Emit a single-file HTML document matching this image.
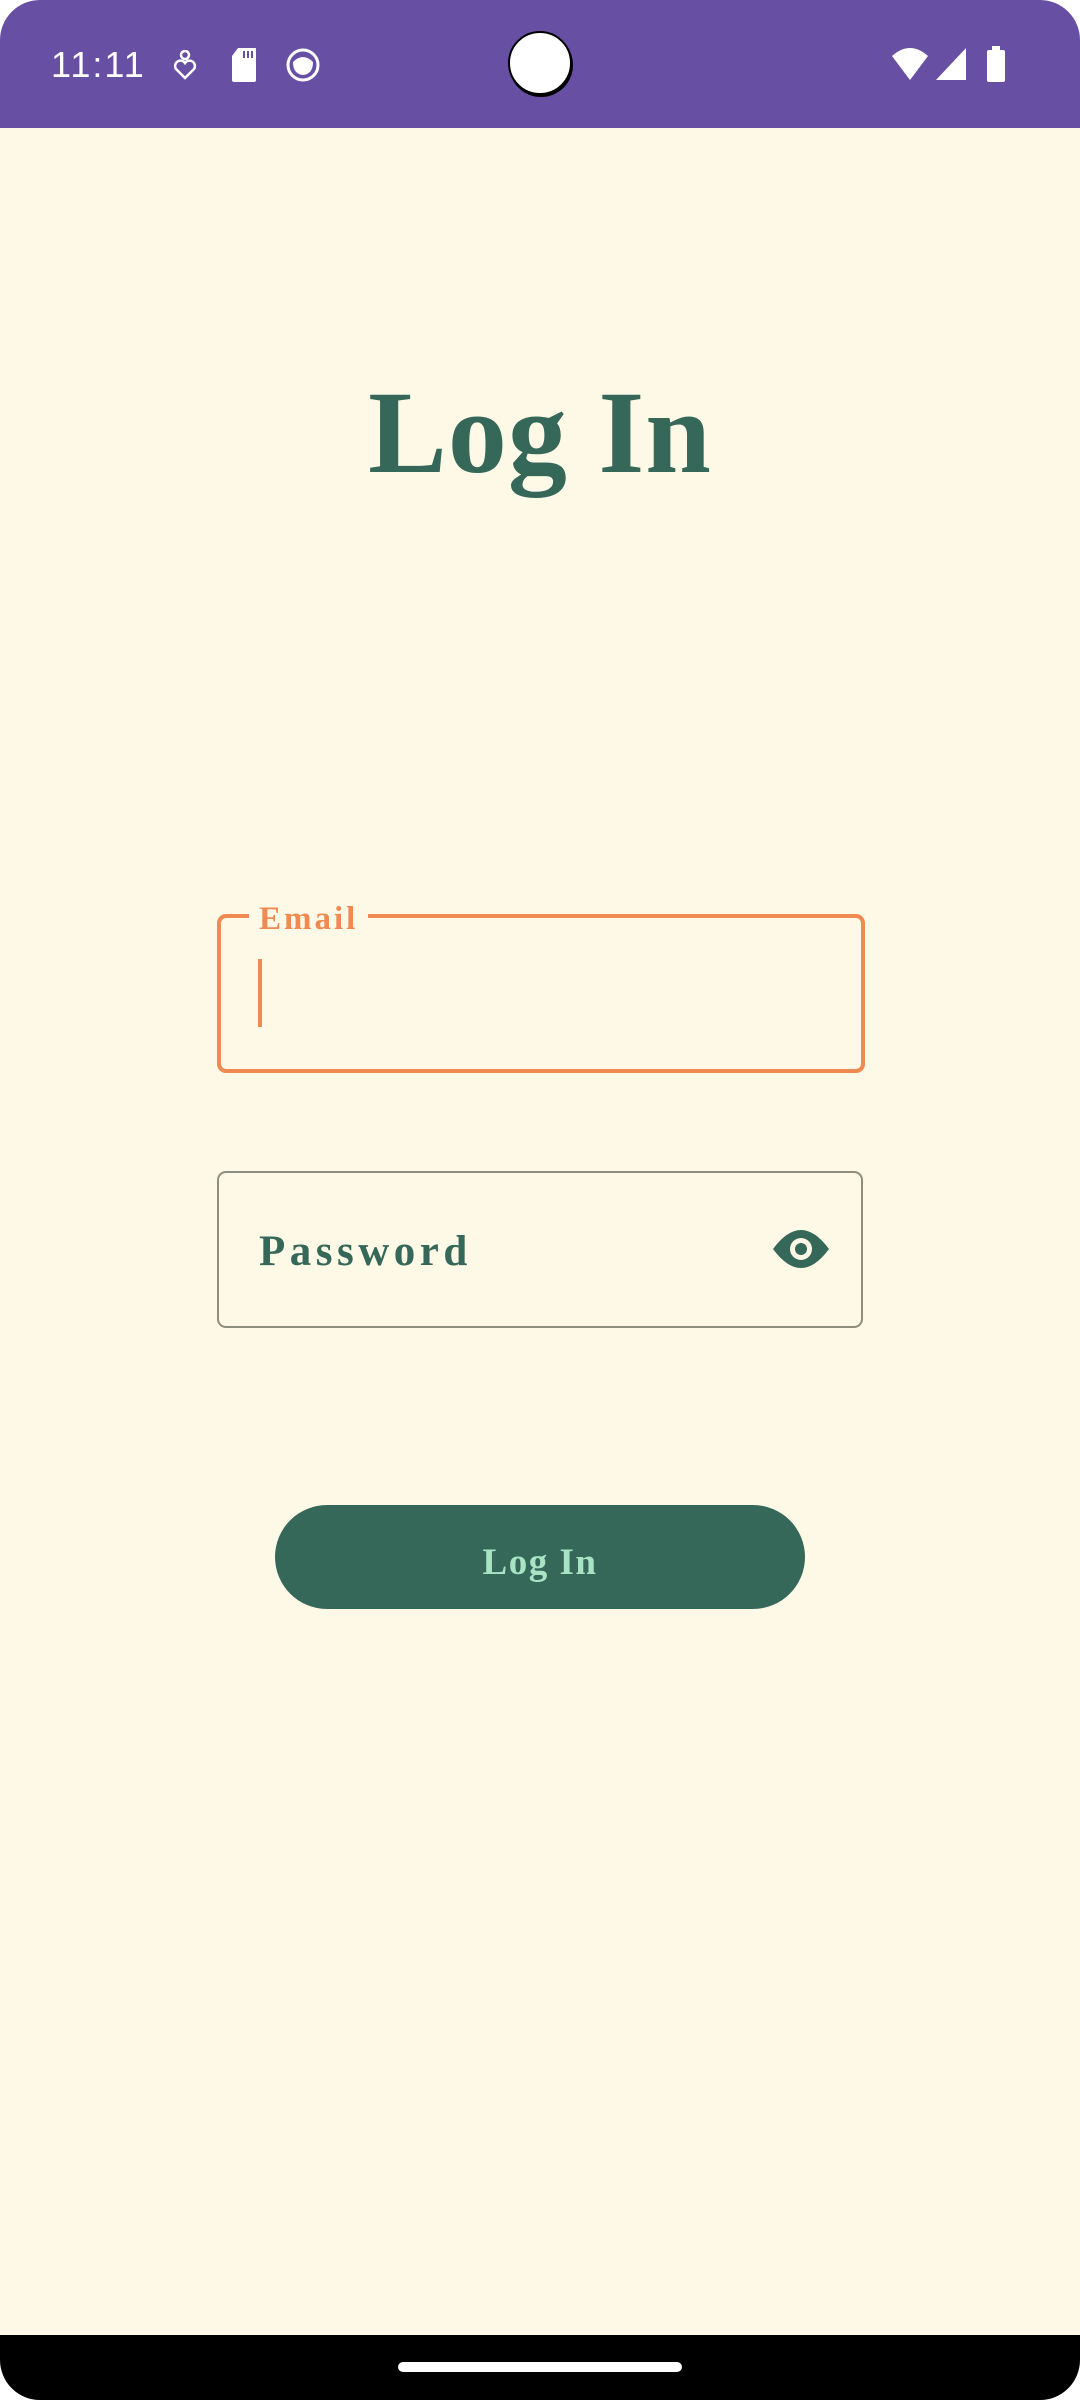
<!DOCTYPE html>
<html><head><meta charset="utf-8"><style>
html,body{margin:0;padding:0;background:#fff;}
#s{position:relative;width:1080px;height:2400px;background:#FEF9E7;border-radius:40px;overflow:hidden;font-family:"Liberation Serif",serif;}
.sb{position:absolute;left:0;top:0;width:1080px;height:128px;background:#6750A4;}
.time{position:absolute;left:51px;top:44px;color:#fff;font:36px "Liberation Sans",sans-serif;letter-spacing:2px;}
.cam{position:absolute;left:508px;top:31px;width:60px;height:60px;border-radius:50%;background:#fff;border:2px solid #000;box-shadow:1px 2px 0 #000;}
.nav{position:absolute;left:0;top:2335px;width:1080px;height:65px;background:#000;}
.pill{position:absolute;left:398px;top:2362px;width:284px;height:10px;border-radius:5px;background:#fff;}
.title{position:absolute;left:0;width:1080px;top:358px;text-align:center;font-size:118px;font-weight:bold;color:#356859;line-height:150px;letter-spacing:1px;}
.email{position:absolute;left:217px;top:914px;width:640px;height:151px;border:4px solid #F08A50;border-radius:9px;}
.elabel{position:absolute;left:249px;top:899px;padding:0 10px;background:#FEF9E7;color:#F08A50;font-size:33px;font-weight:bold;line-height:40px;letter-spacing:3px;}
.cursor{position:absolute;left:258px;top:959px;width:4px;height:68px;background:#F08A50;}
.pw{position:absolute;left:217px;top:1171px;width:642px;height:153px;border:2.5px solid #8E8E7E;border-radius:9px;}
.plabel{position:absolute;left:259px;top:1227px;color:#356859;font-size:43px;font-weight:bold;line-height:50px;letter-spacing:4.5px;}
.btn{position:absolute;left:275px;top:1505px;width:530px;height:104px;border-radius:52px;background:#356859;color:#A8E3C4;text-align:center;line-height:116px;font-size:37px;font-weight:bold;letter-spacing:1.5px;}
</style></head><body><div id="s">
<div class="sb">
<div class="time">11:11</div>
<svg style="position:absolute;left:172px;top:50px" width="26" height="30" viewBox="0 0 26 30"><circle cx="13" cy="5" r="4" fill="none" stroke="#fff" stroke-width="2.5"/><path d="M13 28 L4 19 A5 5 0 0 1 13 13 A5 5 0 0 1 22 19 Z" fill="none" stroke="#fff" stroke-width="2.5"/></svg>
<svg style="position:absolute;left:230px;top:48px" width="28" height="34" viewBox="0 0 28 34"><path d="M8 0 H26 V32 a2 2 0 0 1 -2 2 H4 a2 2 0 0 1 -2 -2 V8 Z" fill="#fff"/><rect x="13" y="3" width="2" height="7" fill="#6750A4"/><rect x="17" y="3" width="2" height="7" fill="#6750A4"/><rect x="21" y="3" width="2" height="7" fill="#6750A4"/></svg>
<svg style="position:absolute;left:286px;top:48px" width="34" height="34" viewBox="0 0 34 34"><circle cx="17" cy="17" r="15" fill="none" stroke="#fff" stroke-width="3"/><path d="M7 14 Q17 4 27 14 Q27 26 17 27 Q7 26 7 14Z" fill="#fff"/></svg>
<div class="cam"></div>
<svg style="position:absolute;left:890px;top:46px" width="40" height="36" viewBox="0 0 40 36"><path d="M20 34 L2 10 Q20 -6 38 10 Z" fill="#fff"/></svg>
<svg style="position:absolute;left:934px;top:46px" width="34" height="36" viewBox="0 0 34 36"><path d="M32 2 V34 H2 Z" fill="#fff"/></svg>
<svg style="position:absolute;left:986px;top:46px" width="20" height="36" viewBox="0 0 20 36"><rect x="6" y="0" width="8" height="5" fill="#fff"/><rect x="1" y="4" width="18" height="32" rx="2" fill="#fff"/></svg>
</div>
<div class="title">Log In</div>
<div class="email"></div>
<div class="elabel">Email</div>
<div class="cursor"></div>
<div class="pw"></div>
<div class="plabel">Password</div>
<svg style="position:absolute;left:772px;top:1229px" width="58" height="40" viewBox="0 0 58 40"><path d="M1 20 Q29 -18 57 20 Q29 58 1 20Z" fill="#356859"/><circle cx="29" cy="20" r="11" fill="#FEF9E7"/><circle cx="29" cy="20" r="6" fill="#356859"/></svg>
<div class="btn">Log In</div>
<div class="nav"></div>
<div class="pill"></div>
</div></body></html>
